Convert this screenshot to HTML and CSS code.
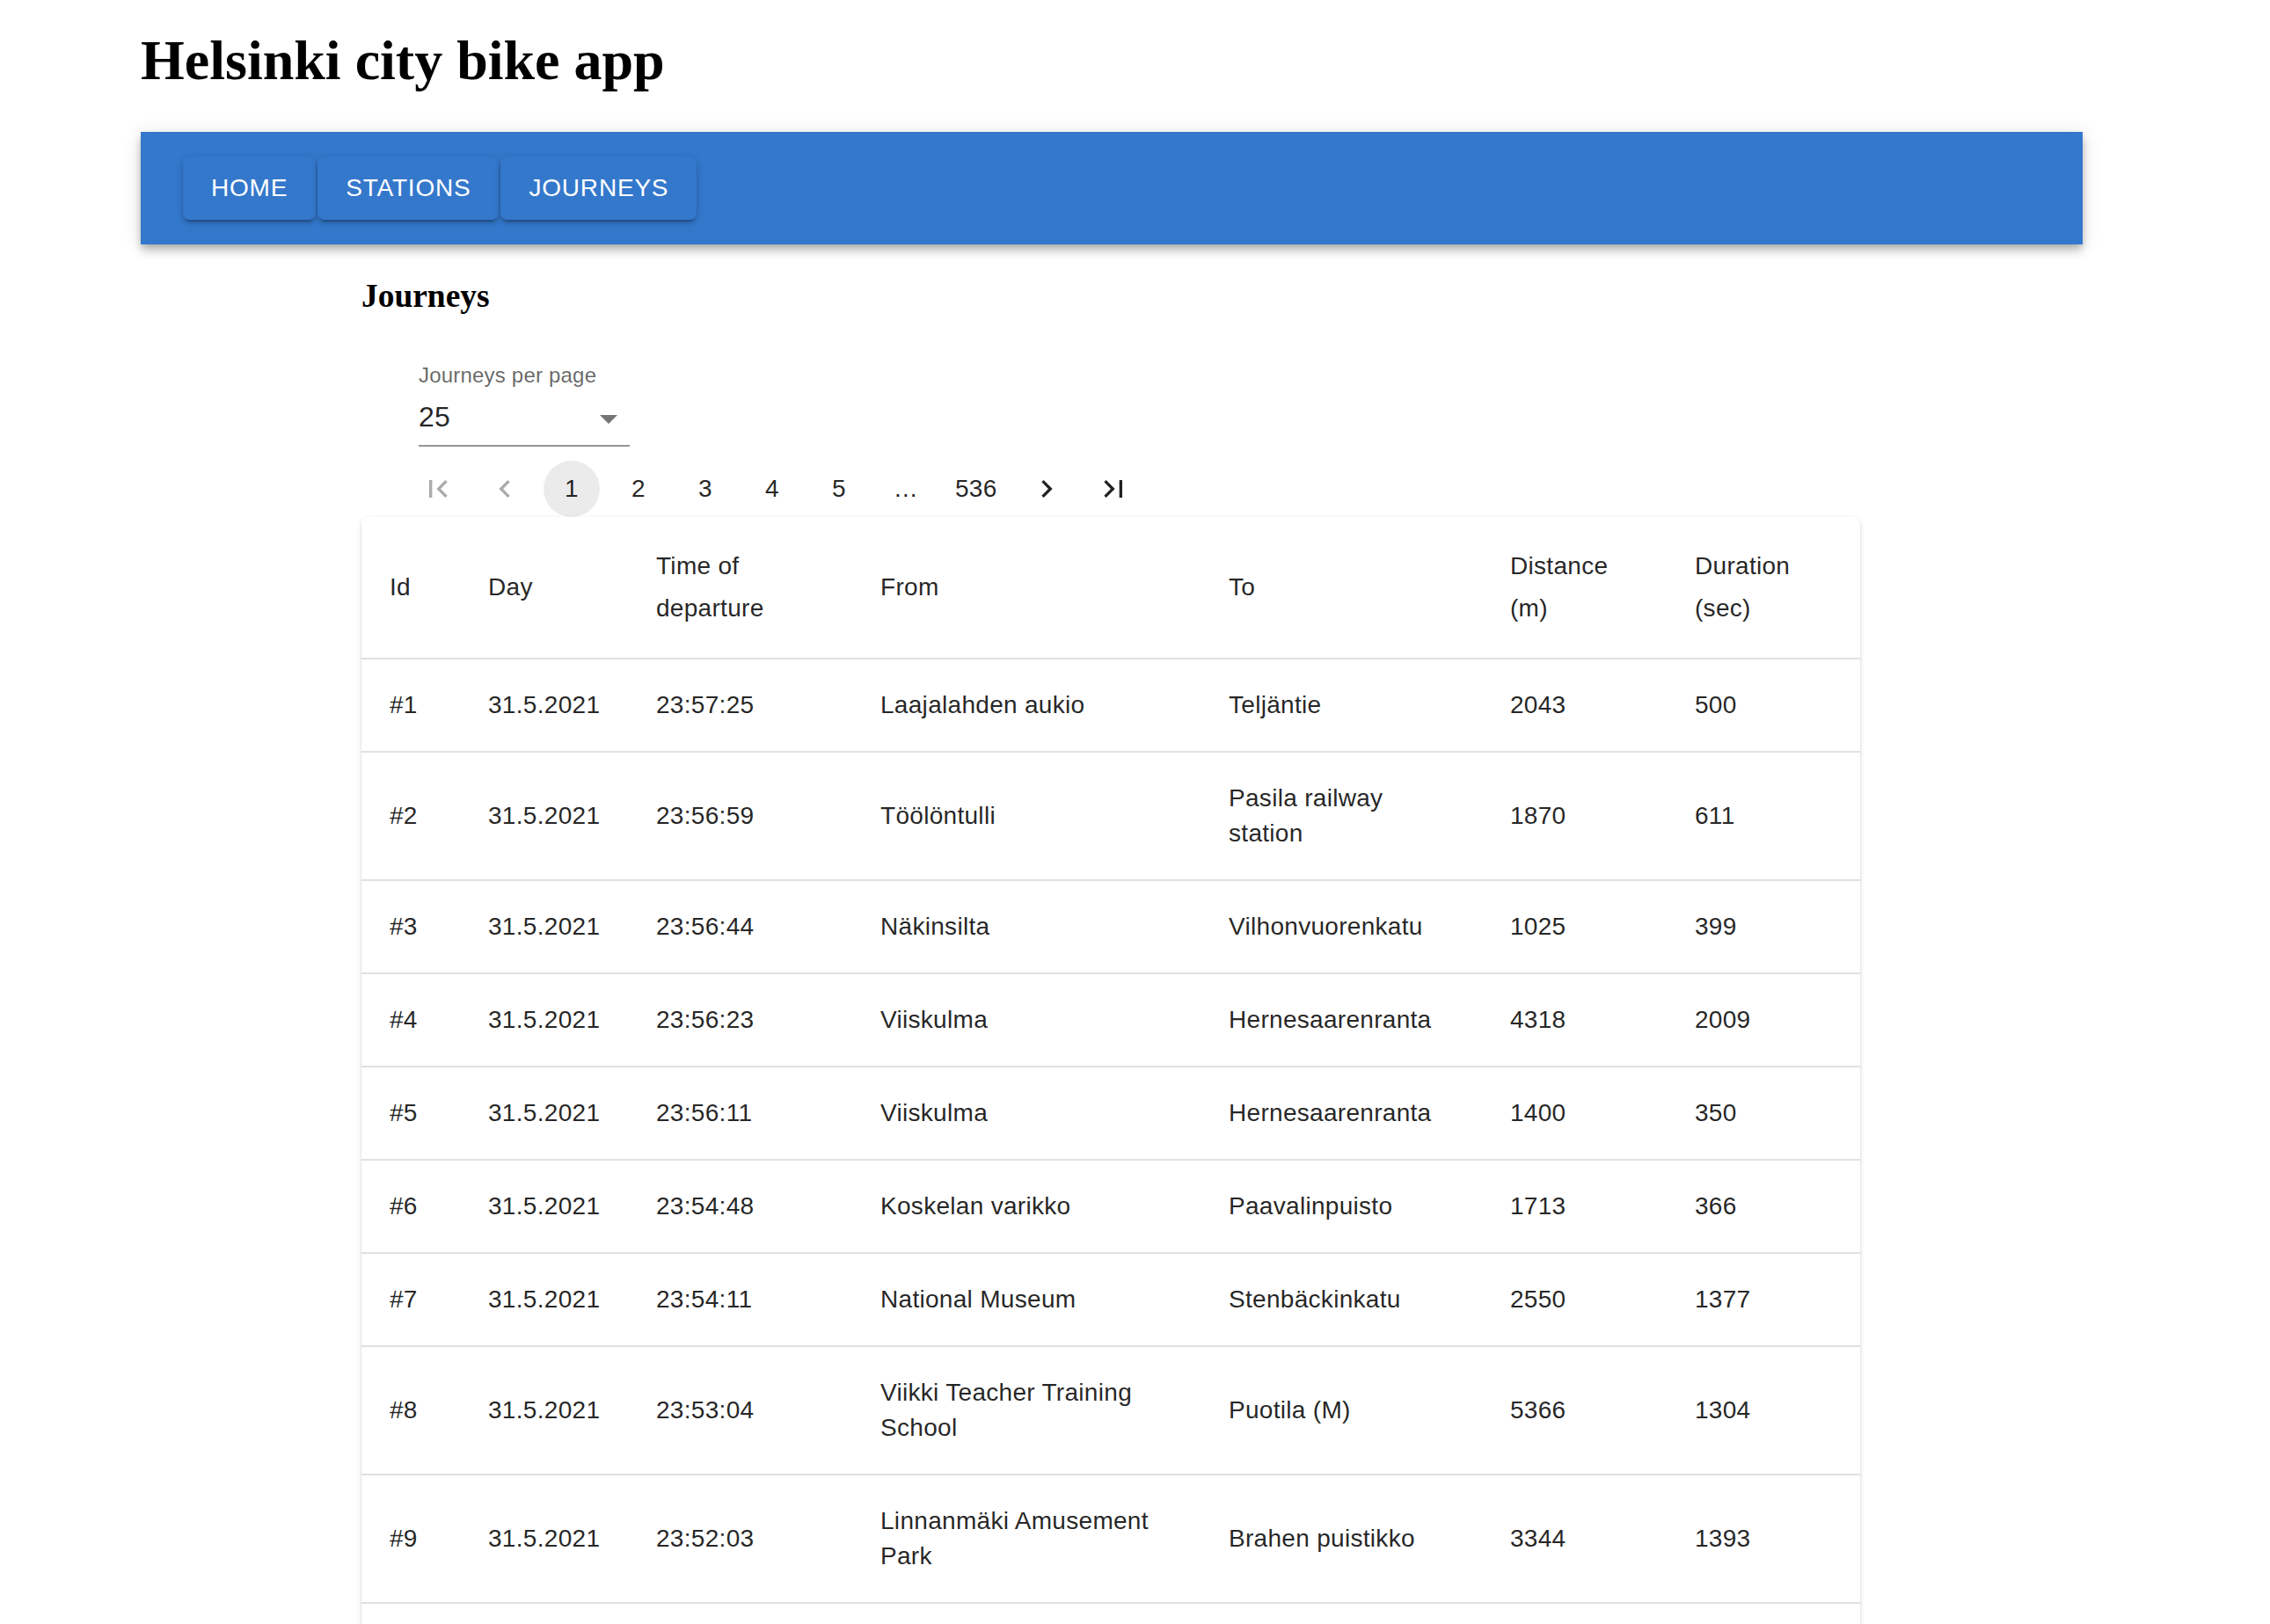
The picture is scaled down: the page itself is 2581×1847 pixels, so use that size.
FILE: index.html
```html
<!DOCTYPE html>
<html lang="en">
<head>
<meta charset="utf-8">
<title>Helsinki city bike app</title>
<link rel="stylesheet" href="styles.css">
</head>
<body>
<div class="page">
  <h1 class="app-title">Helsinki city bike app</h1>
  <nav class="app-bar">
    <div class="toolbar">
      <a class="nav-btn">HOME</a>
      <a class="nav-btn">STATIONS</a>
      <a class="nav-btn">JOURNEYS</a>
    </div>
  </nav>
  <main class="content">
    <h3 class="section-title">Journeys</h3>
    <div class="controls">
      <div class="form-control">
        <label class="select-label">Journeys per page</label>
        <div class="select">
          <span class="select-value">25</span>
          <svg class="select-icon" viewBox="0 0 24 24"><path d="M7 10l5 5 5-5z"/></svg>
        </div>
      </div>
      <ul class="pagination">
        <li class="page-item disabled"><svg class="page-icon" viewBox="0 0 24 24"><path d="M18.41 16.59L13.82 12l4.59-4.59L17 6l-6 6 6 6zM6 6h2v12H6z"/></svg></li>
        <li class="page-item disabled"><svg class="page-icon" viewBox="0 0 24 24"><path d="M15.41 7.41L14 6l-6 6 6 6 1.41-1.41L10.83 12z"/></svg></li>
        <li class="page-item selected">1</li>
        <li class="page-item">2</li>
        <li class="page-item">3</li>
        <li class="page-item">4</li>
        <li class="page-item">5</li>
        <li class="page-item ellipsis">…</li>
        <li class="page-item">536</li>
        <li class="page-item"><svg class="page-icon" viewBox="0 0 24 24"><path d="M10 6L8.59 7.41 13.17 12l-4.58 4.59L10 18l6-6z"/></svg></li>
        <li class="page-item"><svg class="page-icon" viewBox="0 0 24 24"><path d="M5.59 7.41L10.18 12l-4.59 4.59L7 18l6-6-6-6zM16 6h2v12h-2z"/></svg></li>
      </ul>
    </div>
    <div class="card">
      <table class="journeys">
        <colgroup>
          <col class="col-id"><col class="col-day"><col class="col-time"><col class="col-from"><col class="col-to"><col class="col-dist"><col class="col-dur">
        </colgroup>
        <thead>
          <tr><th>Id</th><th>Day</th><th>Time of departure</th><th>From</th><th>To</th><th>Distance (m)</th><th>Duration (sec)</th></tr>
        </thead>
        <tbody>
          <tr><td>#1</td><td>31.5.2021</td><td>23:57:25</td><td>Laajalahden aukio</td><td>Teljäntie</td><td>2043</td><td>500</td></tr>
          <tr><td>#2</td><td>31.5.2021</td><td>23:56:59</td><td>Töölöntulli</td><td>Pasila railway station</td><td>1870</td><td>611</td></tr>
          <tr><td>#3</td><td>31.5.2021</td><td>23:56:44</td><td>Näkinsilta</td><td>Vilhonvuorenkatu</td><td>1025</td><td>399</td></tr>
          <tr><td>#4</td><td>31.5.2021</td><td>23:56:23</td><td>Viiskulma</td><td>Hernesaarenranta</td><td>4318</td><td>2009</td></tr>
          <tr><td>#5</td><td>31.5.2021</td><td>23:56:11</td><td>Viiskulma</td><td>Hernesaarenranta</td><td>1400</td><td>350</td></tr>
          <tr><td>#6</td><td>31.5.2021</td><td>23:54:48</td><td>Koskelan varikko</td><td>Paavalinpuisto</td><td>1713</td><td>366</td></tr>
          <tr><td>#7</td><td>31.5.2021</td><td>23:54:11</td><td>National Museum</td><td>Stenbäckinkatu</td><td>2550</td><td>1377</td></tr>
          <tr><td>#8</td><td>31.5.2021</td><td>23:53:04</td><td>Viikki Teacher Training School</td><td>Puotila (M)</td><td>5366</td><td>1304</td></tr>
          <tr><td>#9</td><td>31.5.2021</td><td>23:52:03</td><td>Linnanmäki Amusement Park</td><td>Brahen puistikko</td><td>3344</td><td>1393</td></tr>
          <tr class="empty-row"><td></td><td></td><td></td><td></td><td></td><td></td><td></td></tr>
        </tbody>
      </table>
    </div>
  </main>
</div>
</body>
</html>
```

FILE: styles.css
```css
html {
  overflow: hidden;
}

body {
  margin: 0;
  background: #ffffff;
  font-family: "Liberation Sans", Arial, Helvetica, sans-serif;
  color: rgba(0, 0, 0, 0.87);
}

.page {
  padding-left: 160px;
}

.app-title {
  font-family: "Liberation Serif", "Times New Roman", serif;
  font-size: 64px;
  font-weight: 700;
  line-height: 72px;
  margin: 33px 0 45px;
  color: #000;
}

.app-bar {
  width: 2208px;
  height: 128px;
  box-sizing: border-box;
  padding: 0 48px;
  display: flex;
  align-items: center;
  background: #3478cc;
  box-shadow: 0 4px 8px -2px rgba(0, 0, 0, 0.2), 0 8px 10px 0 rgba(0, 0, 0, 0.14), 0 2px 20px 0 rgba(0, 0, 0, 0.12);
}

.toolbar {
  display: flex;
  gap: 2px;
}

.nav-btn {
  display: inline-flex;
  align-items: center;
  justify-content: center;
  box-sizing: border-box;
  min-width: 128px;
  padding: 12px 32px;
  font-size: 28px;
  line-height: 48px;
  font-weight: 500;
  letter-spacing: 0.8px;
  color: #ffffff;
  background: #3478cc;
  border-radius: 8px;
  box-shadow: 0 6px 2px -4px rgba(0, 0, 0, 0.2), 0 4px 4px 0 rgba(0, 0, 0, 0.14), 0 2px 10px 0 rgba(0, 0, 0, 0.12);
  text-decoration: none;
}

.content {
  margin-left: 251px;
  width: 1704px;
}

.section-title {
  font-family: "Liberation Serif", "Times New Roman", serif;
  font-size: 37.44px;
  font-weight: 700;
  line-height: 42px;
  margin: 38px 0 37px;
  color: #000;
}

.controls {
  display: flex;
  flex-direction: column;
  align-items: flex-start;
  padding-left: 49px;
}

.form-control {
  display: flex;
  flex-direction: column;
  width: 240px;
  margin: 16px;
}

.select-label {
  display: block;
  font-size: 24px;
  line-height: 32px;
  letter-spacing: 0.2px;
  color: rgba(0, 0, 0, 0.6);
  white-space: nowrap;
}

.select {
  position: relative;
  padding: 8px 0 9px;
  border-bottom: 2px solid rgba(0, 0, 0, 0.42);
  font-size: 32px;
  line-height: 46px;
  letter-spacing: 0.3px;
  color: rgba(0, 0, 0, 0.87);
}

.select-icon {
  position: absolute;
  right: 0;
  top: 9px;
  width: 48px;
  height: 48px;
  fill: rgba(0, 0, 0, 0.54);
}

.pagination {
  display: flex;
  align-items: center;
  list-style: none;
  margin: 0;
  padding: 0;
}

.page-item {
  display: flex;
  align-items: center;
  justify-content: center;
  box-sizing: border-box;
  min-width: 64px;
  height: 64px;
  padding: 0 12px;
  margin: 0 6px;
  border-radius: 32px;
  font-size: 28px;
  line-height: 40px;
  letter-spacing: 0.3px;
  color: rgba(0, 0, 0, 0.87);
}

.page-item.selected {
  background: rgba(0, 0, 0, 0.08);
}

.page-item.disabled {
  opacity: 0.38;
}

.page-icon {
  width: 40px;
  height: 40px;
  flex: none;
  fill: currentColor;
}

.card {
  background: #ffffff;
  border-radius: 8px;
  overflow: hidden;
  box-shadow: 0 4px 2px -2px rgba(0, 0, 0, 0.2), 0 2px 2px 0 rgba(0, 0, 0, 0.14), 0 2px 6px 0 rgba(0, 0, 0, 0.12);
}

.journeys {
  width: 100%;
  border-collapse: collapse;
  table-layout: fixed;
}

.col-id { width: 112px; }
.col-day { width: 191px; }
.col-time { width: 255px; }
.col-from { width: 396px; }
.col-to { width: 320px; }
.col-dist { width: 210px; }
.col-dur { width: 220px; }

.journeys th,
.journeys td {
  padding: 32px;
  border-bottom: 2px solid #e0e0e0;
  text-align: left;
  vertical-align: middle;
  font-size: 28px;
  letter-spacing: 0.3px;
  color: rgba(0, 0, 0, 0.87);
}

.journeys th {
  font-weight: 500;
  line-height: 48px;
}

.journeys td {
  font-weight: 400;
  line-height: 40px;
}

.empty-row td {
  height: 40px;
}
```
